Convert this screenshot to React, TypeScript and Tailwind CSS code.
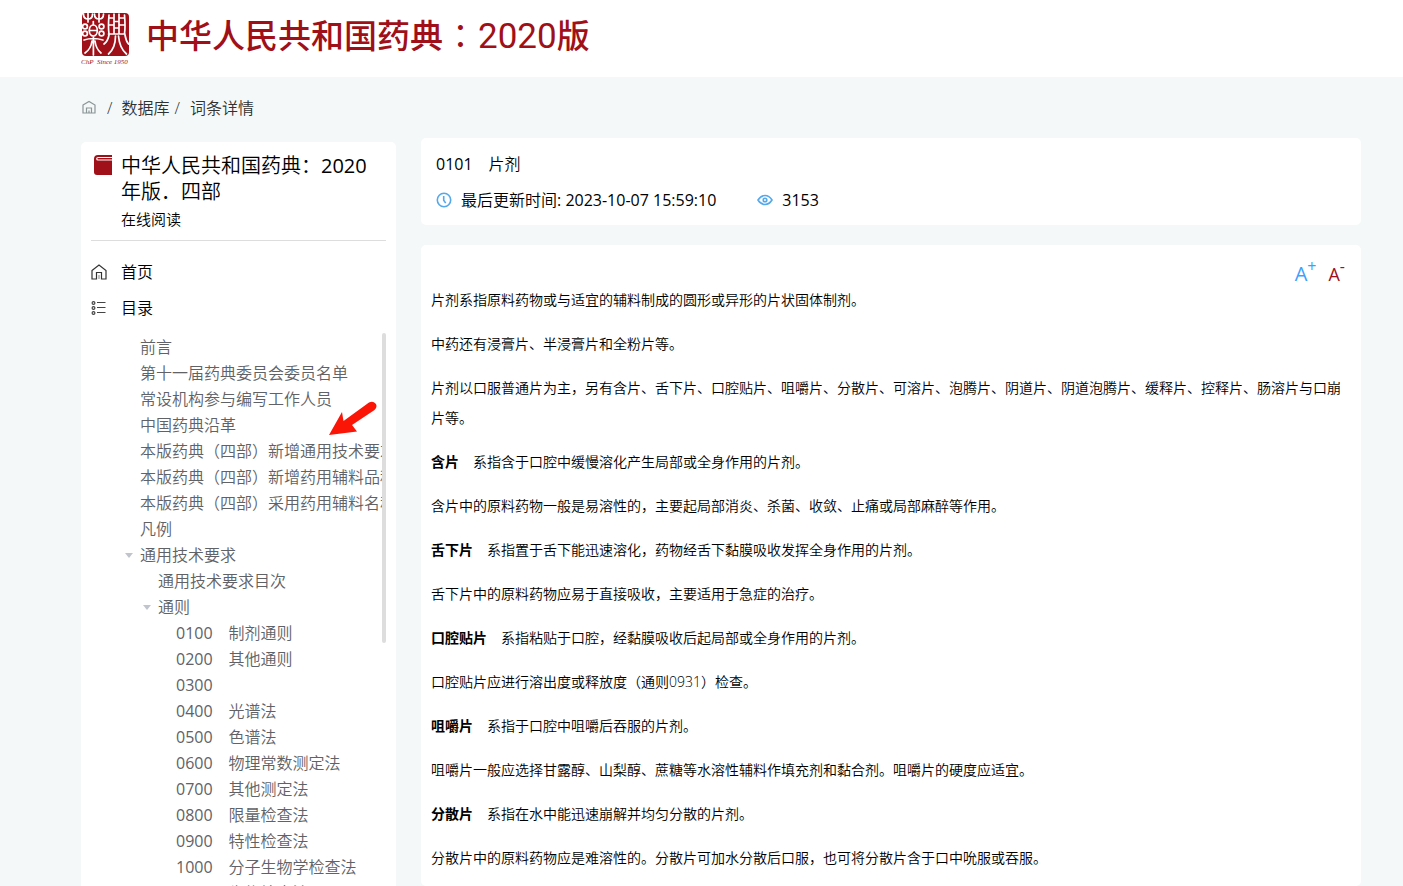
import type { ReactNode } from "react";

const FONT = "font-['Open_Sans','Noto_Sans_CJK_SC',sans-serif]";

type TreeItem = { code?: string; text: string; level: "root" | "child" | "leaf"; open?: boolean };

const tree: TreeItem[] = [
  { text: "前言", level: "root" },
  { text: "第十一届药典委员会委员名单", level: "root" },
  { text: "常设机构参与编写工作人员", level: "root" },
  { text: "中国药典沿革", level: "root" },
  { text: "本版药典（四部）新增通用技术要求", level: "root" },
  { text: "本版药典（四部）新增药用辅料品种", level: "root" },
  { text: "本版药典（四部）采用药用辅料名称", level: "root" },
  { text: "凡例", level: "root" },
  { text: "通用技术要求", level: "root", open: true },
  { text: "通用技术要求目次", level: "child" },
  { text: "通则", level: "child", open: true },
  { code: "0100", text: "　制剂通则", level: "leaf" },
  { code: "0200", text: "　其他通则", level: "leaf" },
  { code: "0300", text: "", level: "leaf" },
  { code: "0400", text: "　光谱法", level: "leaf" },
  { code: "0500", text: "　色谱法", level: "leaf" },
  { code: "0600", text: "　物理常数测定法", level: "leaf" },
  { code: "0700", text: "　其他测定法", level: "leaf" },
  { code: "0800", text: "　限量检查法", level: "leaf" },
  { code: "0900", text: "　特性检查法", level: "leaf" },
  { code: "1000", text: "　分子生物学检查法", level: "leaf" },
  { code: "1100", text: "　生物检查法", level: "leaf" },
];

const indent = { root: "pl-[30px]", child: "pl-12", leaf: "pl-[66px]" };

const paragraphs: { term?: string; text: string }[] = [
  { text: "片剂系指原料药物或与适宜的辅料制成的圆形或异形的片状固体制剂。" },
  { text: "中药还有浸膏片、半浸膏片和全粉片等。" },
  {
    text: "片剂以口服普通片为主，另有含片、舌下片、口腔贴片、咀嚼片、分散片、可溶片、泡腾片、阴道片、阴道泡腾片、缓释片、控释片、肠溶片与口崩片等。",
  },
  { term: "含片", text: "系指含于口腔中缓慢溶化产生局部或全身作用的片剂。" },
  { text: "含片中的原料药物一般是易溶性的，主要起局部消炎、杀菌、收敛、止痛或局部麻醉等作用。" },
  { term: "舌下片", text: "系指置于舌下能迅速溶化，药物经舌下黏膜吸收发挥全身作用的片剂。" },
  { text: "舌下片中的原料药物应易于直接吸收，主要适用于急症的治疗。" },
  { term: "口腔贴片", text: "系指粘贴于口腔，经黏膜吸收后起局部或全身作用的片剂。" },
  { text: "口腔贴片应进行溶出度或释放度（通则0931）检查。" },
  { term: "咀嚼片", text: "系指于口腔中咀嚼后吞服的片剂。" },
  { text: "咀嚼片一般应选择甘露醇、山梨醇、蔗糖等水溶性辅料作填充剂和黏合剂。咀嚼片的硬度应适宜。" },
  { term: "分散片", text: "系指在水中能迅速崩解并均匀分散的片剂。" },
  { text: "分散片中的原料药物应是难溶性的。分散片可加水分散后口服，也可将分散片含于口中吮服或吞服。" },
];

function Logo() {
  return (
    <svg width="50" height="54" viewBox="0 0 50 54" role="img" aria-label="药典">
      <rect x="1" y="1" width="47" height="43" rx="4" fill="#a01018" />
      <g fill="none" stroke="#fff" strokeWidth="1.7" strokeLinecap="round">
        <path d="M2.500 2q0 5 4.500 5t4.500-5M7 1.500V10M13.500 2q0 5 4.500 5t4.500-5M18 1.500V10" />
        <circle cx="4" cy="14.500" r="2.400" />
        <circle cx="4" cy="21.500" r="2.400" />
        <circle cx="20.500" cy="14.500" r="2.400" />
        <circle cx="20.500" cy="21.500" r="2.400" />
        <path d="M12.300 9.500v3" />
        <ellipse cx="12.300" cy="18.500" rx="4" ry="5.500" />
        <path d="M8.500 18.500h7.500M3 28q9-3 19 0M12.400 25v18M11 29q-1 8-7 12M14 29q1 8 6 12" />
        <path d="M28 3q-1 12 0 19M33 2v20M38 2v20M43.500 3q1 12 0 19M28 6h5M38 6h5M28 13h5M38 13h5M33 9.500h5M33 16h5M27.500 22h16.500M28 23q-1 6-5 9M44 23q1 6 3.500 9M34.500 24q0 12-7 18M37.500 24q1 12 8 18" />
      </g>
      <text x="0" y="52" fill="#a01018" fontSize="7" fontStyle="italic" fontFamily="Liberation Serif, serif">
        ChP&#160; Since 1950
      </text>
    </svg>
  );
}

function HouseIcon({ className }: { className: string }) {
  return (
    <svg className={className} viewBox="0 0 16 16" fill="none" stroke="currentColor" strokeWidth="1.2" aria-hidden="true">
      <path d="M1 6.500L8 1l7 5.500v8.500h-4.500V8.500h-5V15H1z" />
      <path d="M8 11v4" stroke="#999" />
    </svg>
  );
}

function CrumbHouseIcon() {
  return (
    <svg className="size-4" viewBox="0 0 16 16" fill="none" stroke="#8b9696" strokeWidth="1.2" aria-hidden="true">
      <path d="M2 5l6-3.500L14 5v8H2zM5.500 13V8h5v5M8 10.500V13" />
    </svg>
  );
}

function ListIcon() {
  return (
    <svg className="size-4" viewBox="0 0 16 16" fill="none" stroke="#444" strokeWidth="1.200" aria-hidden="true">
      <circle cx="2.500" cy="3" r="1.400" />
      <circle cx="2.500" cy="8" r="1.400" />
      <circle cx="2.500" cy="13" r="1.400" />
      <path d="M6 2.500h8.500M6 7.500h8.500M6 12.500h8.500" />
    </svg>
  );
}

function BookIcon() {
  return (
    <svg className="h-5 w-[18px]" viewBox="0 0 18 20" aria-hidden="true">
      <path d="M4 0h14v20H3a3 3 0 0 1-3-3V4a4 4 0 0 1 4-4z" fill="#a01018" />
      <path d="M18 2.500H4a1.200 1.200 0 0 0 0 2.500H18" fill="none" stroke="#fff" strokeWidth="1.2" />
    </svg>
  );
}

function ClockIcon() {
  return (
    <svg className="size-4" viewBox="0 0 16 16" fill="none" stroke="#55a8ea" strokeWidth="1.600" aria-hidden="true">
      <circle cx="8" cy="8" r="6.700" />
      <path d="M7.700 4v4.300l2 2.800" />
    </svg>
  );
}

function EyeIcon() {
  return (
    <svg className="size-4" viewBox="0 0 16 16" fill="none" stroke="#55a8ea" strokeWidth="1.600" aria-hidden="true">
      <path d="M1 8q2.800-4.500 7-4.500T15 8q-2.800 4.500-7 4.500T1 8z" />
      <circle cx="8" cy="8" r="1.800" />
    </svg>
  );
}

function PointerArrow() {
  return (
    <svg className="absolute top-[68px] left-[238px]" width="48" height="34" viewBox="0 0 48 34" aria-hidden="true">
      <path d="M0 34L13 11l1.500 9L40 1.500q4-2 6.500 1t-1 6.500L23 24l5 6.500z" fill="#fb1507" />
    </svg>
  );
}

function Num({ children }: { children: ReactNode }) {
  return <span className="font-normal">{children}</span>;
}

function Card({ className, children }: { className: string; children: ReactNode }) {
  return <section className={`rounded-[5px] bg-white ${className}`}>{children}</section>;
}

export default function App() {
  return (
    <div
      lang="zh-CN"
      className={`flex h-screen flex-col overflow-hidden bg-[#f4f8f9] text-base font-[350] text-black ${FONT}`}
    >
      <header className="flex h-[77px] shrink-0 items-start gap-[15px] bg-white pt-3 pl-[81px]">
        <Logo />
        <h1 className="text-[33px] leading-11 font-medium text-[#a01018]">
          中华人民共和国药典
          <span lang="zh-TW" className="px-px font-['Noto_Sans_CJK_TC',sans-serif] font-normal">
            ：
          </span>
          <span className="font-[Roboto,sans-serif] text-[35px] font-normal">2020</span>版
        </h1>
      </header>

      <nav aria-label="面包屑" className="flex h-[61px] shrink-0 items-center pl-[81px] leading-6 text-[#303133]">
        <a href="#home" aria-label="首页">
          <CrumbHouseIcon />
        </a>
        <span className="pr-[9px] pl-[10px]">/</span>
        <a href="#database">数据库</a>
        <span className="pr-[10px] pl-[5px]">/</span>
        <span>词条详情</span>
      </nav>

      <div className="flex min-h-0 flex-1 gap-[25px] pr-[42px] pl-[81px]">
        <aside className="mt-1 w-[315px] shrink-0 rounded-t-[5px] bg-white px-[10px] pt-[11px]">
          <div className="flex h-[88px] items-start gap-[9px] border-b border-[#ddd] pl-[3px]">
            <span className="pt-0.5">
              <BookIcon />
            </span>
            <div>
              <h2 className="text-xl leading-[26px]">
                中华人民共和国药典：<Num>2020</Num>年版．四部
              </h2>
              <a href="#read" className="block text-[15px] leading-7">
                在线阅读
              </a>
            </div>
          </div>

          <a href="#home" className="mt-3 flex h-[37px] items-center gap-[14px]">
            <HouseIcon className="size-4 text-[#333]" />
            首页
          </a>
          <a href="#catalog" className="flex h-9 items-center gap-[14px]">
            <ListIcon />
            目录
          </a>

          <div className="relative mt-[7px] pl-[19px]">
            <ul className="overflow-hidden pt-px whitespace-nowrap text-[#606266]">
              {tree.map((item) => (
                <li key={item.code ?? item.text} className={`flex h-[26px] items-center ${indent[item.level]}`}>
                  {item.open && (
                    <button type="button" aria-label="收起" className="-ml-[15px] flex w-[15px] items-center">
                      <svg width="8" height="5" viewBox="0 0 8 5" aria-hidden="true">
                        <path d="M0 0h8L4 5z" fill="#c0c4cc" />
                      </svg>
                    </button>
                  )}
                  <a href="#entry">
                    {item.code && <Num>{item.code}</Num>}
                    {item.text}
                  </a>
                </li>
              ))}
            </ul>
            <span className="absolute top-0 right-0 h-[310px] w-1 rounded-full bg-[#ddd]" />
            <PointerArrow />
          </div>
        </aside>

        <main className="flex min-w-0 flex-1 flex-col gap-5">
          <Card className="shrink-0 px-[15px] pt-2 pb-[7px]">
            <h3 className="leading-9">
              <Num>0101</Num>　片剂
            </h3>
            <div className="flex h-9 items-center">
              <ClockIcon />
              <span className="pl-[9px]">
                最后更新时间<Num>: 2023-10-07 15:59:10</Num>
              </span>
              <span className="flex items-center gap-[9px] pl-[41px]">
                <EyeIcon />
                <Num>3153</Num>
              </span>
            </div>
          </Card>

          <Card className="min-h-0 flex-1 overflow-hidden px-[10px] pt-[18px]">
            <div className="flex h-[22px] items-center justify-end gap-3 pr-1.5 font-normal">
              <button type="button" className="flex items-center text-xl text-[#409eff]">
                A<sup className="text-base">+</sup>
              </button>
              <button type="button" className="flex items-center text-lg text-[#a01018]">
                A<sup className="text-base">-</sup>
              </button>
            </div>
            <article className="flex flex-col gap-[14px] text-sm leading-[30px]">
              {paragraphs.map((p) => (
                <p key={p.text}>
                  {p.term && <strong className="font-bold">{p.term}</strong>}
                  {p.term && "　"}
                  {p.text}
                </p>
              ))}
            </article>
          </Card>
        </main>
      </div>
    </div>
  );
}
